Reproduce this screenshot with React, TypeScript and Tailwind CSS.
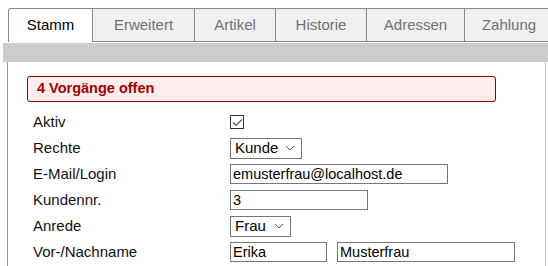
import React from 'react';

const tabs = [
  { label: 'Stamm', w: 'w-[84px]', active: true },
  { label: 'Erweitert', w: 'w-[102px]' },
  { label: 'Artikel', w: 'w-[81px]' },
  { label: 'Historie', w: 'w-[91px]' },
  { label: 'Adressen', w: 'w-[98px]' },
  { label: 'Zahlung', w: 'w-[90px]' },
];

const Chevron = () => (
  <svg width="10" height="6" viewBox="0 0 10 6" className="shrink-0">
    <path d="M1 1l4 4 4-4" fill="none" stroke="#555" strokeWidth="1" />
  </svg>
);

function Row({ label, children }: { label: string; children: React.ReactNode }) {
  return (
    <div className="flex items-center h-[26px]">
      <div className="w-[197px] text-[15px] text-[#111]">{label}</div>
      <div className="flex items-center gap-[10px]">{children}</div>
    </div>
  );
}

const inputCls =
  'h-[20px] border border-[#767676] bg-white px-[2px] text-[14.5px] leading-[18px] text-black flex items-center';

export default function App() {
  return (
    <div className="w-[548px] h-[266px] overflow-hidden bg-white pt-2" style={{ fontFamily: '"Liberation Sans", Arial, sans-serif' }}>
      {/* tabs */}
      <div className="flex pl-2 h-[34px]">
        {tabs.map((t, i) => (
          <div
            key={t.label}
            className={`${t.w} shrink-0 border-t border-l border-[#8a8a8a] flex items-center justify-center text-[15px] ${
              t.active ? 'bg-white text-black rounded-tl-[3px]' : 'bg-[#f0f0f0] text-[#707070] border-b'
            } ${i === tabs.length - 1 ? 'border-r' : ''}`}
          >
            {t.label}
          </div>
        ))}
      </div>
      <div className="h-[1px]" />
      <div className="ml-[3px] h-[19px] bg-[#cccccc]" />

      {/* content */}
      <div className="ml-[7px] w-[539px] h-[220px] border-l border-r border-l-[#9a9a9a] border-r-[#c4c4c4] pt-[14px]">
        <div className="ml-[19px] w-[469px] h-[26px] border border-[#8b0000] rounded-[3px] bg-[#ffeded] flex items-center pl-[9px] text-[14.5px] font-bold text-[#a30000]">
          4 Vorgänge offen
        </div>
        <div className="ml-[25px] mt-[7px]">
          <Row label="Aktiv">
            <div className="w-[14px] h-[14px] border border-[#333] bg-white flex items-center justify-center">
              <svg width="11" height="9" viewBox="0 0 11 9">
                <path d="M1 4.5l3 3 6-6" fill="none" stroke="#555" strokeWidth="1.1" />
              </svg>
            </div>
          </Row>
          <Row label="Rechte">
            <div className="w-[72px] h-[21px] border border-[#767676] bg-white flex items-center justify-between pl-[4px] pr-[6px] text-[15px] text-black">
              <span>Kunde</span>
              <Chevron />
            </div>
          </Row>
          <Row label="E-Mail/Login">
            <div className={`${inputCls} w-[218px]`}>emusterfrau@localhost.de</div>
          </Row>
          <Row label="Kundennr.">
            <div className={`${inputCls} w-[138px]`}>3</div>
          </Row>
          <Row label="Anrede">
            <div className="w-[61px] h-[21px] border border-[#767676] bg-white flex items-center justify-between pl-[4px] pr-[6px] text-[15px] text-black">
              <span>Frau</span>
              <Chevron />
            </div>
          </Row>
          <Row label="Vor-/Nachname">
            <div className={`${inputCls} w-[97px]`}>Erika</div>
            <div className={`${inputCls} w-[178px]`}>Musterfrau</div>
          </Row>
        </div>
      </div>
    </div>
  );
}
